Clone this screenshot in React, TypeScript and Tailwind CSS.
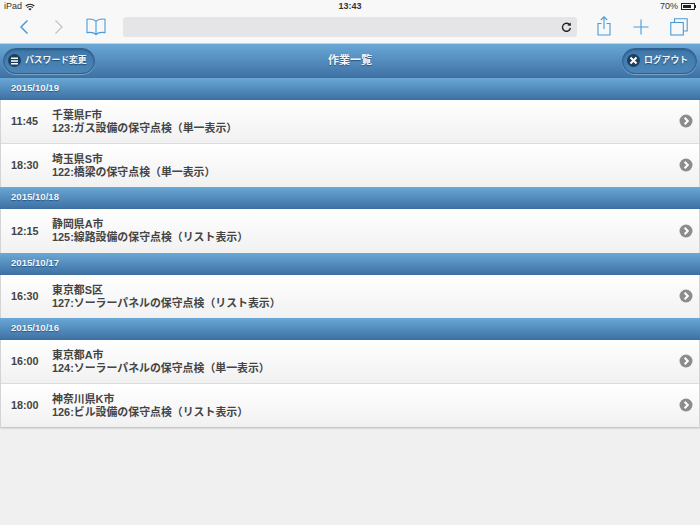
const JP = { fontFamily: '"Liberation Sans", "Noto Sans CJK JP", sans-serif' };

type Row = { t: string; a: string; b: string };
const groups: { d: string; rows: Row[] }[] = [
  { d: "2015/10/19", rows: [
    { t: "11:45", a: "千葉県F市", b: "123:ガス設備の保守点検（単一表示）" },
    { t: "18:30", a: "埼玉県S市", b: "122:橋梁の保守点検（単一表示）" },
  ] },
  { d: "2015/10/18", rows: [{ t: "12:15", a: "静岡県A市", b: "125:線路設備の保守点検（リスト表示）" }] },
  { d: "2015/10/17", rows: [{ t: "16:30", a: "東京都S区", b: "127:ソーラーパネルの保守点検（リスト表示）" }] },
  { d: "2015/10/16", rows: [
    { t: "16:00", a: "東京都A市", b: "124:ソーラーパネルの保守点検（単一表示）" },
    { t: "18:00", a: "神奈川県K市", b: "126:ビル設備の保守点検（リスト表示）" },
  ] },
];

function Chevron() {
  return (
    <svg width="14" height="14" viewBox="0 0 14 14">
      <circle cx="7" cy="7" r="6.5" fill="#8c8c8c" />
      <path d="M5.6 3.8 L8.8 7 L5.6 10.2" fill="none" stroke="#fff" strokeWidth="2" />
    </svg>
  );
}

function Toolbar() {
  const c = "#4a9ad8";
  return (
    <div className="h-[44px] bg-[#f8f8f8] border-b border-[#c8d0d8]">
      <div className="h-[13px] flex items-center justify-between pl-[4px] pr-[4px] text-[9px] text-[#333]">
        <div className="flex items-center gap-[3px]">
          <span>iPad</span>
          <svg width="10" height="8" viewBox="0 0 10 8">
            <path d="M.7 3 A6.2 6.2 0 0 1 9.3 3 M2.2 4.6 A4 4 0 0 1 7.8 4.6" fill="none" stroke="#222" strokeWidth="1.1" />
            <path d="M5 7.6 L3.4 5.9 A2.3 2.3 0 0 1 6.6 5.9 Z" fill="#222" />
          </svg>
        </div>
        <span className="font-bold absolute left-0 right-0 text-center">13:43</span>
        <div className="flex items-center gap-[3px]">
          <span>70%</span>
          <div className="flex items-center">
            <div className="w-[14px] h-[7px] border border-[#222] p-[1px]">
              <div className="w-[8px] h-full bg-[#222]" />
            </div>
            <div className="w-[1px] h-[3px] bg-[#222]" />
          </div>
        </div>
      </div>
      <div className="h-[28px] flex items-center relative">
        <div className="w-[123px] shrink-0 flex items-center pl-[19px]">
          <svg width="10" height="16" viewBox="0 0 10 16"><path d="M8.5 1.5 L2 8 L8.5 14.5" fill="none" stroke={c} strokeWidth="1.5" /></svg>
          <svg width="10" height="16" viewBox="0 0 10 16" className="ml-[25px]"><path d="M1.5 1.5 L8 8 L1.5 14.5" fill="none" stroke="#c4c4c4" strokeWidth="1.3" /></svg>
          <svg width="20" height="18" viewBox="0 0 20 18" className="ml-[22px]">
            <path d="M10 3.5 C8 1.2 4 .8 1 1.2 V14.6 C4 14.2 8 14.4 10 16.6 C12 14.4 16 14.2 19 14.6 V1.2 C16 .8 12 1.2 10 3.5 V16.6" fill="none" stroke={c} strokeWidth="1.1" />
          </svg>
        </div>
        <div className="w-[454px] h-[20px] rounded-[3px] bg-[#e5e5e7] flex items-center justify-end pr-[5px] shrink-0">
          <svg width="11" height="11" viewBox="0 0 11 11">
            <path d="M8.8 3 A4 4 0 1 0 9.4 6" fill="none" stroke="#222" strokeWidth="1.4" />
            <path d="M6.4 3.4 L10 3.8 L9.6 0.4 Z" fill="#222" />
          </svg>
        </div>
        <div className="flex-1 flex items-center pl-[20px] gap-[22px]">
          <svg width="14" height="20" viewBox="0 0 14 20" className="-mt-[2px]">
            <path d="M4.5 7.5 H1 V19 H13 V7.5 H9.5 M7 13 V1 M3.8 4 L7 .8 L10.2 4" fill="none" stroke={c} strokeWidth="1.1" />
          </svg>
          <svg width="16" height="16" viewBox="0 0 16 16"><path d="M8 .5 V15.5 M.5 8 H15.5" stroke={c} strokeWidth="1.1" fill="none" /></svg>
          <svg width="18" height="18" viewBox="0 0 18 18" className="-ml-[1px]">
            <path d="M4.5 4 V.8 H17.2 V13 H13.5" fill="none" stroke={c} strokeWidth="1.1" />
            <rect x=".8" y="4.5" width="12.5" height="12.5" fill="none" stroke={c} strokeWidth="1.1" />
          </svg>
        </div>
      </div>
    </div>
  );
}

function PillButton({ label, icon, className }: { label: string; icon: React.ReactNode; className: string }) {
  return (
    <div className={"h-[26px] rounded-full border border-[#2d5f8f] bg-gradient-to-b from-[#3e77a8] to-[#4c86b8] shadow-[0_1px_0_rgba(255,255,255,0.3),inset_0_1px_2px_rgba(0,0,0,0.25)] flex items-center text-[8.8px] font-bold text-[#f2f6fa] [text-shadow:0_1px_1px_#1f4a70] " + className}>
      <div className="w-[13px] h-[13px] rounded-full bg-[#1d3f5e] flex items-center justify-center shrink-0">{icon}</div>
      <span>{label}</span>
    </div>
  );
}

export default function App() {
  return (
    <div className="w-[700px] h-[525px] overflow-hidden bg-[#f0f0f0] relative" style={JP}>
      <Toolbar />
      <div className="h-[34px] border-b border-[#3d6f9f] bg-gradient-to-b from-[#6aa8d6] to-[#3f73a5] flex items-center justify-between px-[3px] relative">
        <PillButton
          className="w-[92px] pl-[4px] gap-[4px]"
          label="パスワード変更"
          icon={<svg width="9" height="8" viewBox="0 0 9 8"><path d="M1 1.2 H8 M1 4 H8 M1 6.8 H8" stroke="#fff" strokeWidth="1.5" /></svg>}
        />
        <div className="absolute inset-x-0 text-center text-[11px] font-bold text-[#f2f6fa] [text-shadow:0_1px_1px_#2b5580]">作業一覧</div>
        <PillButton
          className="w-[75px] pl-[4px] gap-[4px]"
          label="ログアウト"
          icon={<svg width="9" height="9" viewBox="0 0 9 9"><path d="M1.5 1.5 L7.5 7.5 M7.5 1.5 L1.5 7.5" stroke="#fff" strokeWidth="2" /></svg>}
        />
      </div>
      <div className="shadow-[0_1px_2px_rgba(0,0,0,0.25)] border-x border-[#d4d4d4]">
        {groups.map((g) => (
          <div key={g.d}>
            <div className="h-[22px] -mx-[1px] border-b border-[#3d6f9f] bg-gradient-to-b from-[#6aa8d6] to-[#3f73a5] flex items-center pl-[11px] text-[9.6px] font-bold text-[#f2f6fa] [text-shadow:0_1px_1px_#2b5580]">
              {g.d}
            </div>
            {g.rows.map((r, i) => (
              <div key={r.t} className={"h-[43.5px] flex items-center bg-gradient-to-b from-white to-[#f1f1f1] text-[#444] font-bold " + (i < g.rows.length - 1 ? "border-b border-[#dcdcdc]" : "")}>
                <div className="w-[51px] pl-[10px] text-[10.8px] shrink-0">{r.t}</div>
                <div className="flex-1 text-[10.9px] leading-[13px] pt-[1px]">
                  <div>{r.a}</div>
                  <div>{r.b}</div>
                </div>
                <div className="pr-[6px]"><Chevron /></div>
              </div>
            ))}
          </div>
        ))}
      </div>
    </div>
  );
}
